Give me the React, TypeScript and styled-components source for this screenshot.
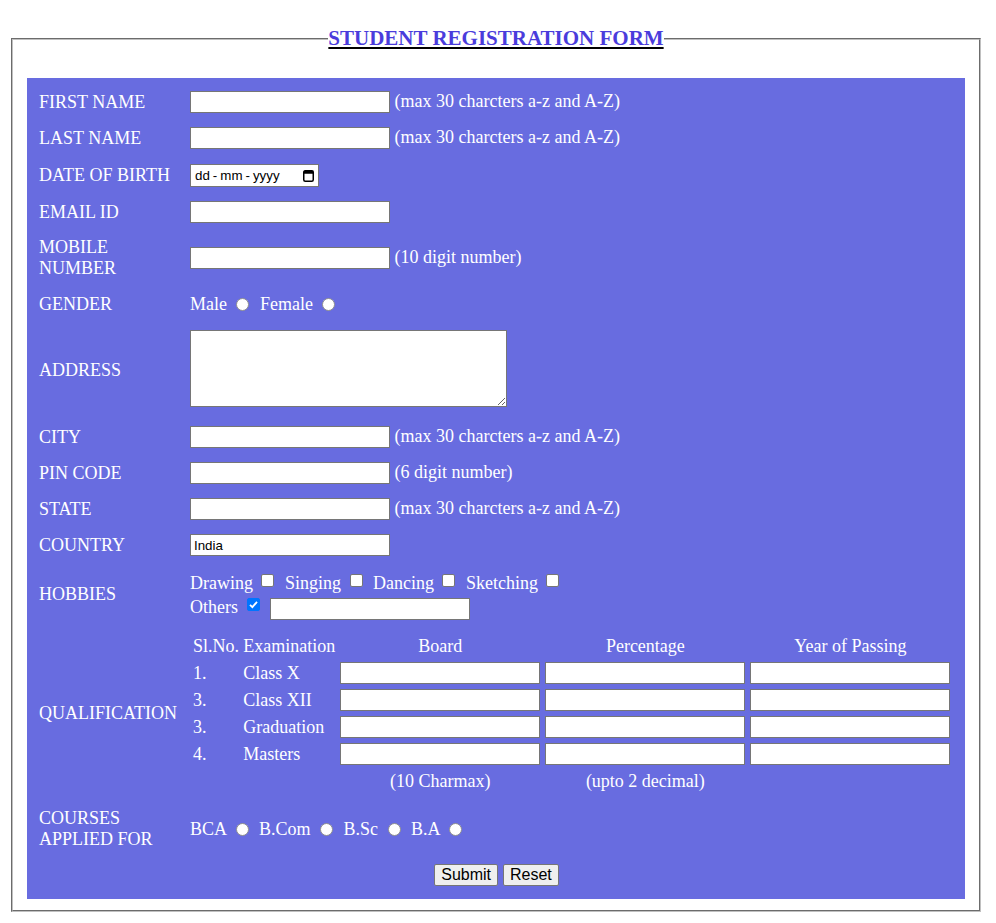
import React from "react";
import styled, { createGlobalStyle } from "styled-components";

const GlobalStyle = createGlobalStyle`
  html, body { background: #ffffff; }
  body {
    margin: 8px;
    font-family: "Liberation Serif", "Times New Roman", serif;
    font-size: 16px;
  }
`;

const Page = styled.div`
  padding: 18px 0 0 3px;
`;

const Fieldset = styled.fieldset`
  box-sizing: border-box;
  width: 970px;
  margin: 0;
  padding: 27px 14px 11px;
  border: 2px groove rgb(192, 192, 192);
`;

const Legend = styled.legend`
  margin: 0 auto;
  padding: 0;
  font-family: "Liberation Serif", "Times New Roman", serif;
  font-size: 21px;
  font-weight: bold;
`;

const Underline = styled.span`
  color: #000000;
  text-decoration: underline;
`;

const Title = styled.span`
  color: #4a3cdc;
`;

const Panel = styled.div`
  background: #686ce0;
  color: #ffffff;
  font-family: "Liberation Serif", "Times New Roman", serif;
  font-size: 18px;
  padding: 12px 11px 11px 12px;
  display: flex;
  flex-direction: column;
  gap: 12px;
`;

const Row = styled.div<{ $h: number }>`
  display: grid;
  grid-template-columns: 140px 1fr;
  column-gap: 11px;
  align-items: center;
  min-height: ${(p) => p.$h}px;
`;

const Label = styled.div``;

const Field = styled.div``;

const HobbyLine = styled.div<{ $h: number; $top?: number }>`
  box-sizing: border-box;
  height: ${(p) => p.$h}px;
  padding-top: ${(p) => p.$top ?? 0}px;
  line-height: ${(p) => p.$h - (p.$top ?? 0)}px;
  white-space: nowrap;
`;

const ButtonRow = styled.div`
  min-height: 26px;
  display: flex;
  justify-content: center;
  align-items: center;
  gap: 5px;
`;

const TextInput = styled.input`
  box-sizing: border-box;
  width: 200px;
  height: 22px;
  margin: 0;
  padding: 1px 3px;
  border: 1px solid #767676;
  background: #ffffff;
  color: #000000;
  font-family: "Liberation Sans", Arial, sans-serif;
  font-size: 13.33px;
  vertical-align: middle;
`;

const AddressBox = styled.textarea`
  display: block;
  box-sizing: border-box;
  width: 317px;
  height: 77px;
  margin: 0 0 4px;
  padding: 2px;
  border: 1px solid #767676;
  background: #ffffff;
  font-family: "Liberation Mono", monospace;
  font-size: 13.33px;
`;

const DateBox = styled.span`
  display: inline-flex;
  align-items: center;
  box-sizing: border-box;
  width: 129px;
  height: 23px;
  padding: 0 4px;
  border: 1px solid #767676;
  background: #ffffff;
  color: #000000;
  font-family: "Liberation Sans", Arial, sans-serif;
  font-size: 13.33px;
  vertical-align: middle;
`;

const DateSep = styled.span`
  margin: 0 3px;
`;

const CalendarIcon = styled.svg`
  margin-left: auto;
  width: 11px;
  height: 13px;
`;

const Radio = styled.input.attrs({ type: "radio" })`
  appearance: none;
  -webkit-appearance: none;
  box-sizing: border-box;
  width: 13px;
  height: 13px;
  margin: 3px 6px 0 5px;
  border: 1px solid #8f8f8f;
  border-radius: 50%;
  background: #ffffff;
  vertical-align: -1px;
`;

const Checkbox = styled.input.attrs({ type: "checkbox" })`
  appearance: none;
  -webkit-appearance: none;
  box-sizing: border-box;
  width: 13px;
  height: 13px;
  margin: 3px 6px 3px 4px;
  border: 1px solid #767676;
  border-radius: 2px;
  background: #ffffff;
  vertical-align: -1px;
  &:checked {
    border-color: #0075ff;
    background-color: #0075ff;
    background-image: url("data:image/svg+xml;utf8,<svg xmlns='http://www.w3.org/2000/svg' viewBox='0 0 13 13'><path d='M3 6.8 L5.4 9.2 L10 3.8' fill='none' stroke='white' stroke-width='1.8'/></svg>");
    background-size: 13px 13px;
    background-position: -1px -1px;
  }
`;

const QualTable = styled.table`
  width: 100%;
  border-spacing: 2px;
  color: #ffffff;
  font-family: "Liberation Serif", "Times New Roman", serif;
  font-size: 18px;
`;

const QRow = styled.tr`
  height: 25px;
`;

const QCell = styled.td<{ $center?: boolean }>`
  padding: 1px;
  text-align: ${(p) => (p.$center ? "center" : "left")};
  white-space: nowrap;
  vertical-align: middle;
`;

const Button = styled.button`
  box-sizing: border-box;
  height: 22px;
  margin: 0;
  padding: 0 6px;
  border: 1px solid #767676;
  border-radius: 2px;
  background: #efefef;
  color: #000000;
  font-family: "Liberation Sans", Arial, sans-serif;
  font-size: 16px;
`;

const qualRows = [
  { no: "1.", exam: "Class X" },
  { no: "3.", exam: "Class XII" },
  { no: "3.", exam: "Graduation" },
  { no: "4.", exam: "Masters" },
];

const NAME_HINT = "(max 30 charcters a-z and A-Z)";

export default function App() {
  return (
    <>
      <GlobalStyle />
      <Page>
        <Fieldset>
          <Legend>
            <Underline>
              <Title>STUDENT REGISTRATION FORM</Title>
            </Underline>
          </Legend>
          <Panel>
            <Row $h={24}>
              <Label>FIRST NAME</Label>
              <Field>
                <TextInput type="text" /> {NAME_HINT}
              </Field>
            </Row>

            <Row $h={24}>
              <Label>LAST NAME</Label>
              <Field>
                <TextInput type="text" /> {NAME_HINT}
              </Field>
            </Row>

            <Row $h={26}>
              <Label>DATE OF BIRTH</Label>
              <Field>
                <DateBox>
                  <span>dd</span>
                  <DateSep>-</DateSep>
                  <span>mm</span>
                  <DateSep>-</DateSep>
                  <span>yyyy</span>
                  <CalendarIcon viewBox="0 0 11 13">
                    <rect x="0.75" y="1.75" width="9.5" height="10.5" rx="1.5" fill="none" stroke="#000" strokeWidth="1.5" />
                    <rect x="0.75" y="1.75" width="9.5" height="3" fill="#000" />
                  </CalendarIcon>
                </DateBox>
              </Field>
            </Row>

            <Row $h={24}>
              <Label>EMAIL ID</Label>
              <Field>
                <TextInput type="text" />
              </Field>
            </Row>

            <Row $h={44}>
              <Label>MOBILE NUMBER</Label>
              <Field>
                <TextInput type="text" /> (10 digit number)
              </Field>
            </Row>

            <Row $h={24}>
              <Label>GENDER</Label>
              <Field>
                Male <Radio name="gender" /> Female <Radio name="gender" />
              </Field>
            </Row>

            <Row $h={85}>
              <Label>ADDRESS</Label>
              <Field>
                <AddressBox />
              </Field>
            </Row>

            <Row $h={24}>
              <Label>CITY</Label>
              <Field>
                <TextInput type="text" /> {NAME_HINT}
              </Field>
            </Row>

            <Row $h={24}>
              <Label>PIN CODE</Label>
              <Field>
                <TextInput type="text" /> (6 digit number)
              </Field>
            </Row>

            <Row $h={24}>
              <Label>STATE</Label>
              <Field>
                <TextInput type="text" /> {NAME_HINT}
              </Field>
            </Row>

            <Row $h={24}>
              <Label>COUNTRY</Label>
              <Field>
                <TextInput type="text" defaultValue="India" />
              </Field>
            </Row>

            <Row $h={50}>
              <Label>HOBBIES</Label>
              <Field>
                <HobbyLine $h={26} $top={2}>
                  Drawing <Checkbox /> Singing <Checkbox /> Dancing <Checkbox /> Sketching <Checkbox />
                </HobbyLine>
                <HobbyLine $h={24}>
                  Others <Checkbox defaultChecked /> <TextInput type="text" />
                </HobbyLine>
              </Field>
            </Row>

            <Row $h={165}>
              <Label>QUALIFICATION</Label>
              <Field>
                <QualTable>
                  <tbody>
                    <QRow>
                      <QCell>Sl.No.</QCell>
                      <QCell>Examination</QCell>
                      <QCell $center>Board</QCell>
                      <QCell $center>Percentage</QCell>
                      <QCell $center>Year of Passing</QCell>
                    </QRow>
                    {qualRows.map((r, i) => (
                      <QRow key={i}>
                        <QCell>{r.no}</QCell>
                        <QCell>{r.exam}</QCell>
                        <QCell>
                          <TextInput type="text" />
                        </QCell>
                        <QCell>
                          <TextInput type="text" />
                        </QCell>
                        <QCell>
                          <TextInput type="text" />
                        </QCell>
                      </QRow>
                    ))}
                    <QRow>
                      <QCell />
                      <QCell />
                      <QCell $center>(10 Charmax)</QCell>
                      <QCell $center>(upto 2 decimal)</QCell>
                      <QCell />
                    </QRow>
                  </tbody>
                </QualTable>
              </Field>
            </Row>

            <Row $h={42}>
              <Label>COURSES APPLIED FOR</Label>
              <Field>
                BCA <Radio name="course" /> B.Com <Radio name="course" /> B.Sc <Radio name="course" /> B.A{" "}
                <Radio name="course" />
              </Field>
            </Row>

            <ButtonRow>
              <Button type="submit">Submit</Button>
              <Button type="reset">Reset</Button>
            </ButtonRow>
          </Panel>
        </Fieldset>
      </Page>
    </>
  );
}
